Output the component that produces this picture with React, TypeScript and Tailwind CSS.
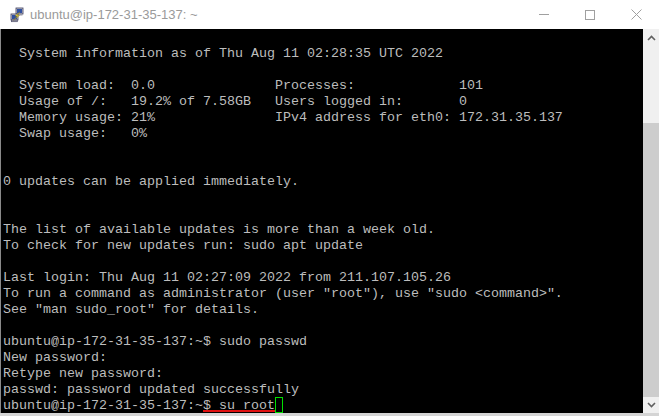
import React from 'react';

const lines: string[] = [
    '',
    '  System information as of Thu Aug 11 02:28:35 UTC 2022',
    '',
    '  System load:  0.0               Processes:             101',
    '  Usage of /:   19.2% of 7.58GB   Users logged in:       0',
    '  Memory usage: 21%               IPv4 address for eth0: 172.31.35.137',
    '  Swap usage:   0%',
    '',
    '',
    '0 updates can be applied immediately.',
    '',
    '',
    'The list of available updates is more than a week old.',
    'To check for new updates run: sudo apt update',
    '',
    'Last login: Thu Aug 11 02:27:09 2022 from 211.107.105.26',
    'To run a command as administrator (user "root"), use "sudo <command>".',
    'See "man sudo_root" for details.',
    '',
    'ubuntu@ip-172-31-35-137:~$ sudo passwd',
    'New password:',
    'Retype new password:',
    'passwd: password updated successfully',
];

// putty app icon: two terminals with a bolt between them
const PuttyIcon: React.FC = () => (
    <svg width="16" height="16" viewBox="0 0 16 16">
        <rect x="7" y="1" width="7" height="6" fill="#c8c8d0" stroke="#3a3a5a" strokeWidth="0.8" />
        <rect x="8" y="2" width="5" height="4" fill="#3050a0" />
        <rect x="7.5" y="7" width="6" height="1.5" fill="#9a9aa8" />
        <rect x="2" y="7" width="7" height="6" fill="#c8c8d0" stroke="#3a3a5a" strokeWidth="0.8" />
        <rect x="3" y="8" width="5" height="4" fill="#3050a0" />
        <rect x="2.5" y="13" width="6" height="1.8" fill="#9a9aa8" stroke="#3a3a5a" strokeWidth="0.5" />
        <path d="M11 5 L6 9 L8.5 9.3 L4.5 13 L10.5 8.5 L8 8.2 Z" fill="#f6e040" stroke="#8a7a10" strokeWidth="0.4" />
    </svg>
);

const TitleBar: React.FC = () => (
    <div className="flex h-[29px] items-center bg-white">
        <div className="ml-[9px] flex h-4 w-4 items-center justify-center">
            <PuttyIcon />
        </div>
        <span className="ml-[5px] text-[13px] leading-none text-[#9a9a9a]" style={{ fontFamily: '"Liberation Sans", Arial, sans-serif' }}>
            ubuntu@ip-172-31-35-137: ~
        </span>
        <div className="ml-auto flex h-full items-center">
            <div className="flex h-full w-[46px] items-center justify-center">
                <div className="h-[1px] w-[10px] bg-[#a0a0a0]" />
            </div>
            <div className="flex h-full w-[46px] items-center justify-center">
                <div className="h-[10px] w-[10px] border border-[#a0a0a0]" />
            </div>
            <div className="flex h-full w-[46px] items-center justify-center">
                <svg width="11" height="11" viewBox="0 0 11 11">
                    <path d="M0.5 0.5 L10.5 10.5 M10.5 0.5 L0.5 10.5" stroke="#a0a0a0" strokeWidth="1" />
                </svg>
            </div>
        </div>
    </div>
);

const Chevron: React.FC<{ down?: boolean }> = ({ down }) => (
    <svg width="9" height="6" viewBox="0 0 9 6">
        <path d={down ? 'M1 1 L4.5 4.5 L8 1' : 'M1 5 L4.5 1.5 L8 5'} stroke="#606060" strokeWidth="1.6" fill="none" />
    </svg>
);

const ScrollBar: React.FC = () => (
    <div className="flex w-[16px] flex-col bg-[#f0f0f0]">
        <div className="flex h-[17px] items-center justify-center">
            <Chevron />
        </div>
        <div className="h-[77px]" />
        <div className="flex-1 bg-[#cdcdcd]" />
        <div className="flex h-[16px] items-center justify-center">
            <Chevron down />
        </div>
    </div>
);

export default function App() {
    return (
        <div className="flex h-[416px] w-[659px] flex-col overflow-hidden bg-[#d4d4d4]">
            <TitleBar />
            <div className="flex h-[384px]">
                <div className="w-[1px] bg-[#8a8a8a]" />
                <div className="flex-1 overflow-hidden bg-black pl-[2px]">
                    <pre
                        className="m-0 text-[13.33px] leading-[16px] text-[#bdbdbd]"
                        style={{ fontFamily: '"Liberation Mono", "Courier New", monospace' }}
                    >
                        {lines.map((l, i) => (
                            <div key={i} className="h-[16px] whitespace-pre pt-[1px]">{l}</div>
                        ))}
                        <div className="flex h-[16px] items-start whitespace-pre">
                            <span className="pt-[1px]">ubuntu@ip-172-31-35-137:~</span>
                            <span className="relative pt-[1px]">
                                $ su root
                                <span className="absolute bottom-[2px] left-0 right-0 h-[2px] bg-[#e01010]" />
                            </span>
                            <span className="inline-block h-[16px] w-[8px] border border-[#00e000]" />
                        </div>
                    </pre>
                </div>
                <ScrollBar />
            </div>
            <div className="h-[3px] bg-[#d4d4d4]" />
        </div>
    );
}
